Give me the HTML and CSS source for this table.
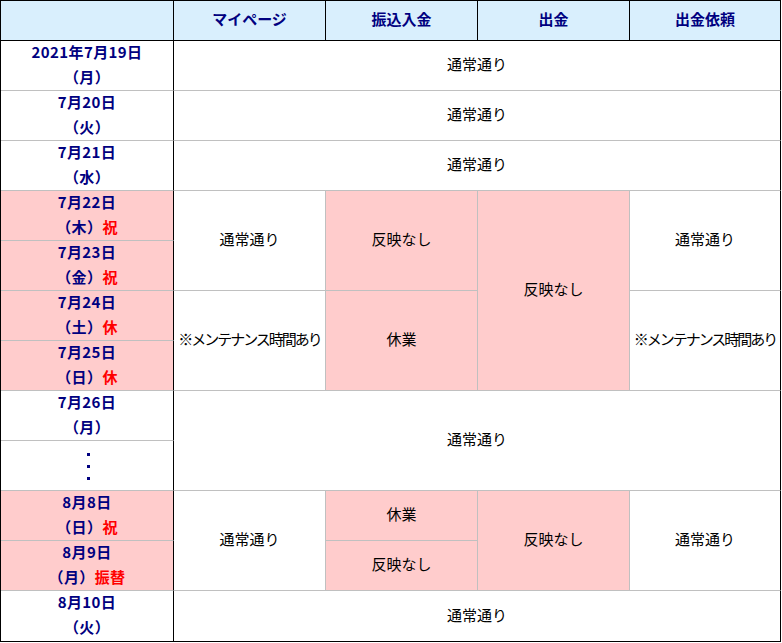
FILE: index.html
```html
<!DOCTYPE html>
<html lang="ja">
<head>
<meta charset="utf-8">
<link rel="stylesheet" href="styles.css">
</head>
<body>
<table class="sched">
  <colgroup>
    <col class="c-date"><col class="c-mid"><col class="c-mid"><col class="c-mid"><col class="c-last">
  </colgroup>
  <thead>
    <tr>
      <th class="hd first"></th>
      <th class="hd">マイページ</th>
      <th class="hd">振込入金</th>
      <th class="hd">出金</th>
      <th class="hd last">出金依頼</th>
    </tr>
  </thead>
  <tbody>
    <tr>
      <td class="date"><div class="dt">2021年7月19日<br>（月）</div></td>
      <td class="st last" colspan="4">通常通り</td>
    </tr>
    <tr>
      <td class="date"><div class="dt">7月20日<br>（火）</div></td>
      <td class="st last" colspan="4">通常通り</td>
    </tr>
    <tr>
      <td class="date"><div class="dt">7月21日<br>（水）</div></td>
      <td class="st last" colspan="4">通常通り</td>
    </tr>
    <tr>
      <td class="date hol"><div class="dt">7月22日<br>（木）<span class="red">祝</span></div></td>
      <td class="st" rowspan="2">通常通り</td>
      <td class="st pink" rowspan="2">反映なし</td>
      <td class="st pink" rowspan="4">反映なし</td>
      <td class="st last" rowspan="2">通常通り</td>
    </tr>
    <tr>
      <td class="date hol"><div class="dt">7月23日<br>（金）<span class="red">祝</span></div></td>
    </tr>
    <tr>
      <td class="date hol"><div class="dt">7月24日<br>（土）<span class="red">休</span></div></td>
      <td class="st tight" rowspan="2">※メンテナンス時間あり</td>
      <td class="st pink" rowspan="2">休業</td>
      <td class="st tight last" rowspan="2">※メンテナンス時間あり</td>
    </tr>
    <tr>
      <td class="date hol"><div class="dt">7月25日<br>（日）<span class="red">休</span></div></td>
    </tr>
    <tr>
      <td class="date"><div class="dt">7月26日<br>（月）</div></td>
      <td class="st last" colspan="4" rowspan="2">通常通り</td>
    </tr>
    <tr>
      <td class="date dotcell"><span class="vdots" aria-label="…"><i></i><i></i><i></i></span></td>
    </tr>
    <tr>
      <td class="date hol"><div class="dt">8月8日<br>（日）<span class="red">祝</span></div></td>
      <td class="st" rowspan="2">通常通り</td>
      <td class="st pink">休業</td>
      <td class="st pink" rowspan="2">反映なし</td>
      <td class="st last" rowspan="2">通常通り</td>
    </tr>
    <tr>
      <td class="date hol"><div class="dt">8月9日<br>（月）<span class="red">振替</span></div></td>
      <td class="st pink">反映なし</td>
    </tr>
    <tr class="end">
      <td class="date"><div class="dt">8月10日<br>（火）</div></td>
      <td class="st last" colspan="4">通常通り</td>
    </tr>
  </tbody>
</table>
</body>
</html>
```

FILE: styles.css
```css
html, body {
  margin: 0;
  padding: 0;
  background: #ffffff;
}
body {
  font-family: "Noto Sans CJK JP", "Noto Sans", sans-serif;
  font-size: 15px;
  color: #000000;
}
.sched {
  border-collapse: separate;
  border-spacing: 0;
  table-layout: fixed;
  width: 781px;
  border-top: 1px solid #000000;
  border-left: 1px solid #000000;
}
.c-date { width: 173px; }
.c-mid { width: 152px; }
.c-last { width: 151px; }

.sched th, .sched td {
  padding: 0;
  text-align: center;
  vertical-align: middle;
  border-right: 1px solid #c0c0c0;
  border-bottom: 1px solid #c0c0c0;
}
.sched th.hd {
  height: 35px;
  padding-bottom: 4px;
  line-height: 20px;
  background: #d9effd;
  color: #000080;
  font-weight: bold;
  font-size: 15px;
  border-right: 1px solid #000000;
  border-bottom: 1px solid #000000;
}
.sched td.date {
  height: 49px;
  vertical-align: top;
  color: #000080;
  font-weight: bold;
  font-size: 15px;
  letter-spacing: 0.4px;
  border-right: 1px solid #000000;
}
.dt {
  line-height: 25px;
  margin-top: -2px;
  height: 50px;
  margin-bottom: -2px;
}
.sched td.hol {
  background: #ffcccc;
}
.red {
  color: #ff0000;
}
.sched td.st {
  background: #ffffff;
  padding-bottom: 3px;
  line-height: 20px;
}
.sched td.pink {
  background: #ffcccc;
}
.sched td.last {
  border-right: 1px solid #000000;
}
.sched td.tight {
  letter-spacing: -2px;
}
.sched tr.end td {
  border-bottom: 1px solid #000000;
}
.sched tr.end td.date {
  height: 50px;
}
.sched td.dotcell {
  vertical-align: middle;
}
.vdots {
  display: inline-flex;
  flex-direction: column;
  align-items: center;
  gap: 9px;
  vertical-align: middle;
  transform: translate(1px, 1px);
}
.vdots i {
  display: block;
  width: 3px;
  height: 3px;
  background: #000080;
}
```
